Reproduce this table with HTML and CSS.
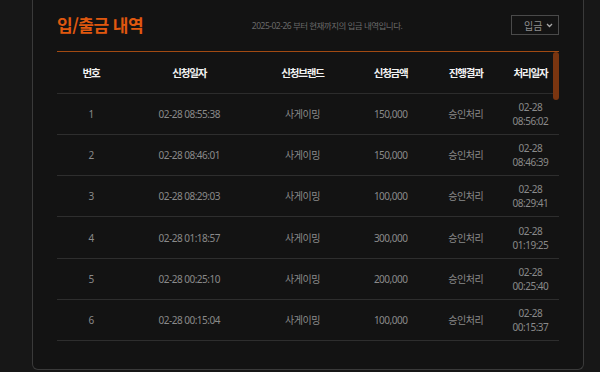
FILE: index.html
```html
<!DOCTYPE html>
<html lang="ko">
<head>
<meta charset="utf-8">
<link rel="stylesheet" href="styles.css">
</head>
<body>
<div class="panel">
  <div class="head">
    <h2 class="title">입/출금 내역</h2>
    <p class="sub">2025-02-26 부터 현재까지의 입금 내역입니다.</p>
    <div class="select">
      <span>입금</span>
      <svg class="chev" width="7" height="5" viewBox="0 0 7 5"><path d="M1 1l2.5 2.5L6 1" fill="none" stroke="#aaa" stroke-width="1.3"/></svg>
    </div>
  </div>
  <div class="tablewrap">
    <table class="list">
      <colgroup>
        <col class="c1"><col class="c2"><col class="c3"><col class="c4"><col class="c5"><col class="c6">
      </colgroup>
      <thead>
        <tr><th>번호</th><th>신청일자</th><th>신청브랜드</th><th>신청금액</th><th>진행결과</th><th>처리일자</th></tr>
      </thead>
      <tbody>
        <tr><td>1</td><td>02-28 08:55:38</td><td>사게이밍</td><td>150,000</td><td>승인처리</td><td>02-28<br>08:56:02</td></tr>
        <tr><td>2</td><td>02-28 08:46:01</td><td>사게이밍</td><td>150,000</td><td>승인처리</td><td>02-28<br>08:46:39</td></tr>
        <tr><td>3</td><td>02-28 08:29:03</td><td>사게이밍</td><td>100,000</td><td>승인처리</td><td>02-28<br>08:29:41</td></tr>
        <tr><td>4</td><td>02-28 01:18:57</td><td>사게이밍</td><td>300,000</td><td>승인처리</td><td>02-28<br>01:19:25</td></tr>
        <tr><td>5</td><td>02-28 00:25:10</td><td>사게이밍</td><td>200,000</td><td>승인처리</td><td>02-28<br>00:25:40</td></tr>
        <tr><td>6</td><td>02-28 00:15:04</td><td>사게이밍</td><td>100,000</td><td>승인처리</td><td>02-28<br>00:15:37</td></tr>
      </tbody>
    </table>
    <div class="thumb"></div>
  </div>
</div>
</body>
</html>
```
FILE: styles.css
```css
html, body {
  margin: 0;
  padding: 0;
  background: #171717;
  font-family: "Noto Sans", "Noto Sans CJK KR", sans-serif;
}
.panel {
  margin: 0 16px 0 32px;
  height: 370px;
  box-sizing: border-box;
  border: 1px solid #3a3a3a;
  border-top: none;
  border-radius: 0 0 6px 6px;
  background: #131313;
  padding: 15px 24px 0 24px;
}
.head {
  display: flex;
  align-items: center;
  justify-content: space-between;
  height: 20px;
}
.title {
  margin: 0;
  font-family: "Noto Sans CJK KR", sans-serif;
  font-size: 17px;
  font-weight: 700;
  color: #e0580f;
  letter-spacing: -0.5px;
  line-height: 20px;
}
.sub {
  margin: 2px 0 0 0;
  font-size: 8.5px;
  letter-spacing: -0.5px;
  color: #6a6a6a;
  line-height: 12px;
}
.select {
  width: 48px;
  height: 20px;
  box-sizing: border-box;
  border: 1px solid #4a4a4a;
  display: flex;
  align-items: center;
  justify-content: space-between;
  padding: 0 5px 0 12px;
  font-size: 10px;
  color: #8e8e8e;
}
.tablewrap {
  position: relative;
  margin-top: 16px;
  border-top: 1px solid #a24a12;
}
.list {
  width: 100%;
  border-collapse: collapse;
  table-layout: fixed;
  font-size: 10px;
  letter-spacing: -0.5px;
}
.c1 { width: 68px; }
.c2 { width: 128px; }
.c3 { width: 98px; }
.c4 { width: 78px; }
.c5 { width: 72px; }
.c6 { width: 57px; }
.list th {
  height: 40.5px;
  padding: 0;
  font-size: 10.5px;
  font-weight: 700;
  color: #f2f2f2;
  letter-spacing: -1.2px;
  border-bottom: 1px solid #2c2c2c;
}
.list td {
  padding: 6px 0;
  height: 28.3px;
  line-height: 14px;
  text-align: center;
  color: #8a8a8a;
  border-bottom: 1px solid #2e2e2e;
}
.thumb {
  position: absolute;
  top: 0;
  right: 0;
  width: 6px;
  height: 48px;
  border-radius: 3px;
  background: #7a3510;
}
```
